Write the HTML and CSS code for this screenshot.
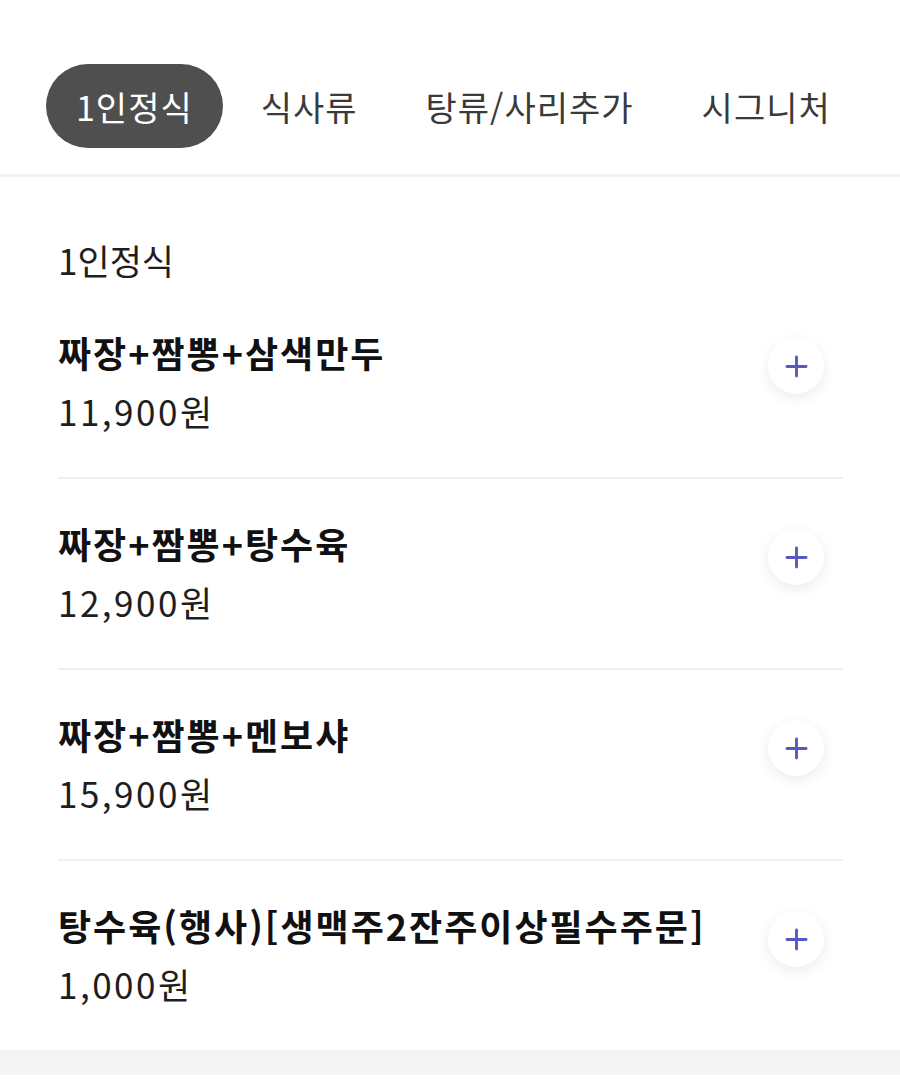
FILE: index.html
```html
<!DOCTYPE html>
<html lang="ko">
<head>
    <meta charset="UTF-8">
    <meta name="viewport" content="width=device-width, initial-scale=1.0">
    <title>메뉴</title>
    <link rel="stylesheet" href="styles.css">
</head>
<body>

    <!-- 카테고리 탭 -->
    <nav class="tabs">
        <a class="tab active">1인정식</a>
        <a class="tab">식사류</a>
        <a class="tab">탕류/사리추가</a>
        <a class="tab">시그니처</a>
    </nav>

    <section class="menu">
        <h3 class="menu-title">1인정식</h3>

        <div class="item">
            <div class="item-info">
                <p class="item-name">짜장+짬뽕+삼색만두</p>
                <p class="item-price">11,900원</p>
            </div>
            <button class="add-btn" aria-label="추가">
                <svg viewBox="0 0 24 24"><path d="M12 2v20M2 12h20" /></svg>
            </button>
        </div>

        <div class="item">
            <div class="item-info">
                <p class="item-name">짜장+짬뽕+탕수육</p>
                <p class="item-price">12,900원</p>
            </div>
            <button class="add-btn" aria-label="추가">
                <svg viewBox="0 0 24 24"><path d="M12 2v20M2 12h20" /></svg>
            </button>
        </div>

        <div class="item">
            <div class="item-info">
                <p class="item-name">짜장+짬뽕+멘보샤</p>
                <p class="item-price">15,900원</p>
            </div>
            <button class="add-btn" aria-label="추가">
                <svg viewBox="0 0 24 24"><path d="M12 2v20M2 12h20" /></svg>
            </button>
        </div>

        <div class="item">
            <div class="item-info">
                <p class="item-name">탕수육(행사)[생맥주2잔주이상필수주문]</p>
                <p class="item-price">1,000원</p>
            </div>
            <button class="add-btn" aria-label="추가">
                <svg viewBox="0 0 24 24"><path d="M12 2v20M2 12h20" /></svg>
            </button>
        </div>
    </section>

    <div class="bottom-gap"></div>

</body>
</html>
```

FILE: styles.css
```css
body {
    margin: 0;
    background: #ffffff;
    font-family: "Noto Sans CJK KR", "Noto Sans", sans-serif;
    color: #111;
}

.tabs {
    display: flex;
    gap: 8px;
    padding: 64px 0 26px 46px;
    border-bottom: 3px solid #f1f1f1;
}

.tab {
    display: flex;
    align-items: center;
    height: 84px;
    padding: 0 30px;
    border-radius: 42px;
    font-size: 34px;
    color: #3a3a3a;
    letter-spacing: 1px;
    white-space: nowrap;
}

.tab.active {
    background: #4f4f4f;
    color: #fff;
}

.menu {
    padding: 0 57px 0 58px;
}

.menu-title {
    margin: 0 0 4px;
    padding-top: 59px;
    font-size: 35px;
    font-weight: 400;
    color: #1e1e1e;
    line-height: 48px;
}

.item {
    display: flex;
    align-items: flex-start;
    justify-content: space-between;
    padding: 40px 0 42px;
    border-bottom: 2px solid #efefef;
}

.item:last-child {
    border-bottom: none;
}

.item-info p {
    margin: 0;
    white-space: nowrap;
}

.item-name {
    font-size: 36px;
    font-weight: 700;
    line-height: 48px;
    letter-spacing: 2px;
}

.item-price {
    margin-top: 11px !important;
    font-size: 35px;
    line-height: 48px;
    letter-spacing: 2.5px;
    color: #1e1e1e;
}

.add-btn {
    flex-shrink: 0;
    width: 56px;
    height: 56px;
    margin: 10px 19px 0 0;
    border: none;
    border-radius: 50%;
    background: #fff;
    box-shadow: 0 4px 14px rgba(0, 0, 0, 0.08);
    display: flex;
    align-items: center;
    justify-content: center;
    padding: 0;
}

.add-btn svg {
    width: 23px;
    height: 23px;
    stroke: #5559c0;
    stroke-width: 3;
    stroke-linecap: round;
    fill: none;
}

.bottom-gap {
    height: 25px;
    background: #f4f4f4;
}
```
